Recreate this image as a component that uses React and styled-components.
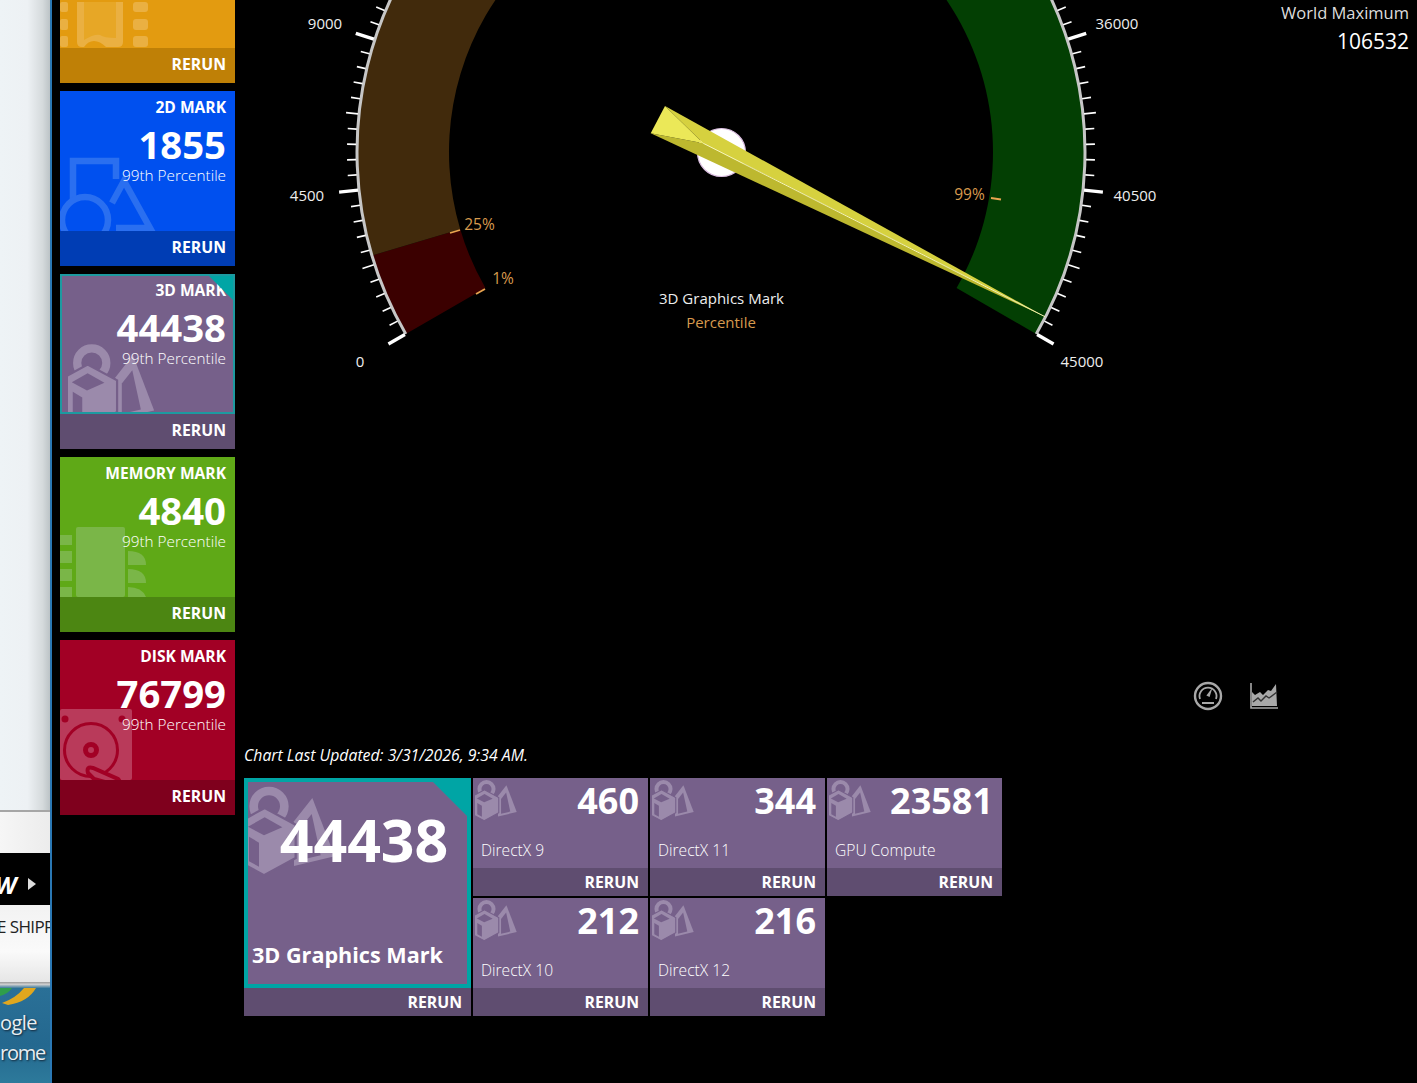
import React from 'react';
import styled, { createGlobalStyle } from 'styled-components';

const GlobalStyle = createGlobalStyle`
  html, body { margin: 0; padding: 0; background: #000; }
  body { font-family: "Open Sans", "Noto Sans", sans-serif; color: #fff; }
`;

const Page = styled.div`
  width: 1417px;
  height: 1083px;
  display: flex;
  overflow: hidden;
  background: #000;
`;

/* the browser window and desktop peeking out on the left */
const Peek = styled.div`
  flex: 0 0 50px;
  display: flex;
  flex-direction: column;
  overflow: hidden;
  border-right: 2px solid #2a78b4;
  white-space: nowrap;
`;

const PeekTop = styled.div`
  height: 810px;
  background: linear-gradient(90deg, #eef3f6 0%, #edf1f4 55%, #d5dadc 85%, #bcc3c6 100%);
  border-bottom: 2px solid #a6a6a6;
`;

const PeekWhite = styled.div`
  height: 41px;
  background: linear-gradient(90deg, #f6f6f6, #ececec);
`;

const PeekBanner = styled.div`
  height: 52px;
  box-sizing: border-box;
  padding-top: 10px;
  background: #000;
  display: flex;
  align-items: center;
  gap: 12px;
  font-size: 24px;
  font-weight: 700;
  font-style: italic;
  text-indent: -5px;
`;

const PeekArrow = styled.span`
  width: 0;
  height: 0;
  border-left: 8px solid #ddd;
  border-top: 6px solid transparent;
  border-bottom: 6px solid transparent;
`;

const PeekShipping = styled.div`
  height: 77px;
  box-sizing: border-box;
  padding-top: 10px;
  background: linear-gradient(180deg, #f2f2f2, #fafafa 60%, #e6e6e6);
  color: #222;
  font-size: 17px;
  letter-spacing: -0.6px;
  text-indent: -3px;
`;

const PeekShade = styled.div`
  height: 6px;
  background: linear-gradient(180deg, #9a9a9a, #cfcfcf 40%, #3d7a9c);
`;

const PeekDesktop = styled.div`
  flex: 1;
  background: linear-gradient(180deg, #2a7097, #24688f 60%, #2d7a9b);
  display: flex;
  flex-direction: column;
`;

const ChromeArc = styled.svg`
  display: block;
  flex: none;
`;

const DesktopLabel = styled.div`
  font-size: 20px;
  line-height: 30px;
  letter-spacing: ${(p) => p.$squeeze}px;
  color: #e8eef2;
  text-shadow: 1px 1px 2px #123;
`;

const Sidebar = styled.div`
  flex: 0 0 175px;
  margin: -92px 0 0 8px;
  display: flex;
  flex-direction: column;
  gap: 8px;
`;

const Card = styled.div`
  height: 175px;
  flex: none;
  display: flex;
  flex-direction: column;
  background: ${(p) => p.$bg};
`;

const CardBody = styled.div`
  position: relative;
  height: 140px;
  box-sizing: border-box;
  overflow: hidden;
  padding: 6px 9px 0 0;
  text-align: right;
  ${(p) => p.$selected && 'border: 2px solid #1d9aa0; padding: 4px 7px 0 0;'}
`;

const CardTitle = styled.div`
  position: relative;
  font-size: 15.6px;
  line-height: 20px;
  font-weight: 700;
`;

const CardScore = styled.div`
  position: relative;
  font-size: 38.3px;
  line-height: 40px;
  font-weight: 700;
  margin-top: 7px;
`;

const CardRank = styled.div`
  position: relative;
  font-size: 15.3px;
  line-height: 18px;
  font-weight: 300;
  margin-top: 2px;
`;

const Corner = styled.div`
  position: absolute;
  top: ${(p) => p.$inset}px;
  right: ${(p) => p.$inset}px;
  width: 0;
  height: 0;
  border-top: ${(p) => p.$size}px solid #00a5a5;
  border-left: ${(p) => p.$size}px solid transparent;
`;

const Rerun = styled.div`
  flex: none;
  height: ${(p) => p.$h}px;
  line-height: ${(p) => p.$line}px;
  padding-right: 9px;
  text-align: right;
  font-size: 15.8px;
  font-weight: 700;
  background: ${(p) => p.$bg};
`;

const IconSlot = styled.svg`
  position: absolute;
  left: ${(p) => p.$left}px;
  bottom: ${(p) => p.$bottom}px;
  display: block;
`;

const ShapesSlot = styled.svg`
  position: absolute;
  left: ${(p) => p.$left}px;
  top: ${(p) => p.$top}px;
  display: block;
`;

const Main = styled.div`
  flex: 1;
  margin-left: 9px;
  display: flex;
  flex-direction: column;
`;

const Stage = styled.div`
  position: relative;
  height: 680px;
  flex: none;
`;

const GaugeSvg = styled.svg`
  display: block;
  font-family: "Open Sans", "Noto Sans", sans-serif;
`;

const WorldMax = styled.div`
  position: absolute;
  top: 2px;
  right: 8px;
  text-align: right;
`;

const WorldLabel = styled.div`
  font-size: 16.5px;
  line-height: 22px;
  color: #ddd;
`;

const WorldValue = styled.div`
  font-size: 21px;
  line-height: 35px;
`;

const ViewSwitch = styled.div`
  display: flex;
  justify-content: flex-end;
  gap: 26px;
  height: 32px;
  padding-right: 138px;
  flex: none;
  align-items: center;
`;

const Updated = styled.div`
  font-size: 15.8px;
  line-height: 20px;
  font-style: italic;
  margin-top: 33px;
`;

const TileGrid = styled.div`
  margin-top: 13px;
  display: grid;
  grid-template-columns: 227px 175px 175px 175px;
  grid-template-rows: 118px 118px;
  gap: 2px;
`;

const Tile = styled.div`
  display: flex;
  flex-direction: column;
  background: #76608a;
  ${(p) => p.$large && 'grid-row: span 2;'}
`;

const TileBody = styled.div`
  position: relative;
  flex: 1;
  overflow: hidden;
  box-sizing: border-box;
  display: flex;
  flex-direction: column;
  justify-content: space-between;
  padding: 3px 9px 8px 8px;
`;

const LargeBody = styled(TileBody)`
  border: 4px solid #00a5a5;
  padding: 23px 4px 14px 4px;
`;

const TileScore = styled.div`
  position: relative;
  text-align: right;
  font-size: 36px;
  line-height: 40px;
  font-weight: 700;
`;

const TileLabel = styled.div`
  position: relative;
  font-size: 15.6px;
  line-height: 20px;
  font-weight: 300;
`;

const LargeScore = styled.div`
  position: relative;
  text-align: center;
  font-size: 59px;
  line-height: 68px;
  font-weight: 700;
  padding-left: 13px;
`;

const LargeLabel = styled.div`
  position: relative;
  font-size: 21.6px;
  line-height: 30px;
  font-weight: 700;
`;

/* ---------- icons ---------- */

const ShapesIcon = ({ size, left, top }) => (
  <ShapesSlot $left={left} $top={top} width={size} height={size} viewBox="0 0 300 300">
    <circle cx="75" cy="85" r="46" fill="none" stroke="#9b8aab" strokeWidth="26" />
    <path d="M205 60 L272 235 L150 264 L150 130 Z" fill="#9b8aab" />
    <path d="M203 108 L230 232 L170 246 L170 150 Z" fill="#76608a" />
    <path d="M62 90 L155 140 L155 240 L60 292 L-35 240 L-30 140 Z" fill="#9b8aab" stroke="#76608a" strokeWidth="7" />
    <path d="M62 118 L115 148 L60 172 L12 146 Z" fill="#76608a" />
    <path d="M15 176 L45 194 L45 266 L15 250 Z" fill="#76608a" />
  </ShapesSlot>
);

const SquaresIcon = () => (
  <IconSlot $left={0} $bottom={0} width="100" height="76" viewBox="0 0 100 76">
    <g fill="none" stroke="#2a6ff0" strokeWidth="6.5">
      <path d="M13 44 V6 H56 V24" />
      <circle cx="25" cy="65" r="23" />
      <path d="M52 48 L64 26 L90 73 H56" />
    </g>
  </IconSlot>
);

const CpuIcon = () => (
  <IconSlot $left={0} $bottom={0} width="100" height="46" viewBox="0 0 100 46">
    <g fill="#eab042">
      <path d="M22 -6 H57 Q63 -6 63 0 V40 Q63 45 58 45 H46 Q40 39 34 39 Q28 39 24 45 H22 Q17 45 17 40 V0 Q17 -6 22 -6 Z" />
      <rect x="0" y="0" width="8" height="10" rx="2" />
      <rect x="0" y="17" width="8" height="11" rx="2" />
      <rect x="0" y="34" width="8" height="11" rx="2" />
      <rect x="73" y="0" width="15" height="10" rx="3" />
      <rect x="73" y="17" width="15" height="11" rx="3" />
      <rect x="73" y="34" width="15" height="11" rx="3" />
    </g>
    <path d="M24 0 H56 V36 Q44 36 40 33 Q34 32 24 38 Z" fill="#e7a726" />
  </IconSlot>
);

const RamIcon = () => (
  <IconSlot $left={0} $bottom={0} width="90" height="70" viewBox="0 0 90 70">
    <g fill="#7ab648">
      <rect x="16" y="0" width="49" height="70" rx="2" />
      <rect x="0" y="8" width="12" height="10" />
      <rect x="0" y="24" width="12" height="12" />
      <rect x="0" y="42" width="12" height="12" />
      <rect x="0" y="60" width="12" height="10" />
      <path d="M68 24 Q86 24 86 38 H68 Z" />
      <path d="M68 42 Q86 42 86 56 H68 Z" />
      <path d="M68 60 Q82 60 86 70 H68 Z" />
    </g>
  </IconSlot>
);

const DiskIcon = () => (
  <IconSlot $left={0} $bottom={0} width="72" height="71" viewBox="0 0 72 71">
    <rect width="72" height="71" rx="2" fill="#b93a5a" />
    <g fill="#a20025">
      <circle cx="5" cy="10" r="3.5" />
      <circle cx="62" cy="10" r="3.5" />
    </g>
    <circle cx="31" cy="41" r="26.5" fill="none" stroke="#a20025" strokeWidth="3" />
    <circle cx="31" cy="41" r="5.5" fill="none" stroke="#a20025" strokeWidth="5" />
    <path d="M28 64 Q26 57 33 59 L58 70 Q62 74 56 76 L34 70 Z" fill="#b93a5a" stroke="#a20025" strokeWidth="4" />
  </IconSlot>
);

const DialIcon = () => (
  <svg width="30" height="30" viewBox="0 0 30 30">
    <circle cx="15" cy="15" r="13" fill="none" stroke="#a8a8a8" strokeWidth="2.4" />
    <path d="M7 18 A8.5 8.5 0 1 1 23 18" fill="none" stroke="#a8a8a8" strokeWidth="1.8" />
    <path d="M13.4 14.5 L19.5 6.5 L16.6 16 Z" fill="#a8a8a8" />
    <path d="M9 22 H21" stroke="#a8a8a8" strokeWidth="2" />
  </svg>
);

const TrendIcon = () => (
  <svg width="30" height="30" viewBox="0 0 30 30">
    <path d="M2 2 V27 H29" fill="none" stroke="#a8a8a8" strokeWidth="1.6" />
    <path d="M3 11 L6 14 L11 11 L14 14 L19 9 L22 10 L27 3 L28 25 H3 Z" fill="#a8a8a8" />
    <path d="M4 21 L9 17 L12 20 L17 15 L20 17 L28 11" fill="none" stroke="#333" strokeWidth="1.4" />
  </svg>
);

/* ---------- gauge ---------- */

const CX = 721;
const CY = 152;
const R_OUT = 364;
const R_IN = 272;

const polar = (deg, r) => {
  const a = (deg * Math.PI) / 180;
  return [CX + r * Math.cos(a), CY + r * Math.sin(a)];
};

const band = (from, to, fill) => {
  const [ax, ay] = polar(from, R_OUT);
  const [bx, by] = polar(to, R_OUT);
  const [cx, cy] = polar(to, R_IN);
  const [dx, dy] = polar(from, R_IN);
  const large = to - from > 180 ? 1 : 0;
  return (
    <path
      fill={fill}
      d={`M${ax} ${ay} A${R_OUT} ${R_OUT} 0 ${large} 1 ${bx} ${by} L${cx} ${cy} A${R_IN} ${R_IN} 0 ${large} 0 ${dx} ${dy} Z`}
    />
  );
};

const tickMarks = Array.from({ length: 101 }, (_, i) => {
  const deg = 150 + i * 2.4;
  const major = i % 10 === 0;
  const mid = i % 5 === 0 && !major;
  const [x1, y1] = polar(deg, R_OUT + 1);
  const [x2, y2] = polar(deg, R_OUT + (major ? 20 : mid ? 13 : 10));
  return (
    <line key={i} x1={x1} y1={y1} x2={x2} y2={y2} stroke="#fff" strokeWidth={major ? 3.4 : 1.6} />
  );
});

const scaleLabels = [
  ['0', 360, 367],
  ['4500', 307, 201],
  ['9000', 325, 29],
  ['36000', 1117, 29],
  ['40500', 1135, 201],
  ['45000', 1082, 367],
];

const pctLabels = [
  ['25%', 479.5, 230, 450, 233, 460, 230],
  ['1%', 503, 284, 476, 294, 485, 289],
  ['99%', 969.5, 200, 991, 198, 1001, 199.5],
];

const Gauge = () => {
  const [ox1, oy1] = polar(150, R_OUT);
  const [ox2, oy2] = polar(390, R_OUT);
  return (
    <GaugeSvg width="1173" height="680" viewBox="244 0 1173 680">
      {band(150, 163.5, '#3b0000')}
      {band(163.5, 270, '#412a0c')}
      {band(270, 390, '#033f03')}
      <path
        d={`M${ox1} ${oy1} A${R_OUT} ${R_OUT} 0 1 1 ${ox2} ${oy2}`}
        fill="none"
        stroke="#c6c6c6"
        strokeWidth="3"
      />
      {tickMarks}
      {scaleLabels.map(([t, x, y]) => (
        <text key={t} x={x} y={y} fill="#eee" fontSize="15" textAnchor="middle">{t}</text>
      ))}
      {pctLabels.map(([t, x, y, x1, y1, x2, y2]) => (
        <g key={t}>
          <text x={x} y={y} fill="#d79a4e" fontSize="15.5" textAnchor="middle">{t}</text>
          <line x1={x1} y1={y1} x2={x2} y2={y2} stroke="#e9a550" strokeWidth="1.8" />
        </g>
      ))}
      <text x="721.5" y="304" fill="#eee" fontSize="15" textAnchor="middle">3D Graphics Mark</text>
      <text x="721" y="328" fill="#d79a4e" fontSize="15" textAnchor="middle">Percentile</text>

      <circle cx="721.5" cy="152.5" r="24" fill="#fff" stroke="#dcbfe2" strokeWidth="1.2" />
      <polygon points="665,106 703.3,143.3 1045,316.7" fill="#d6d13f" />
      <polygon points="650.7,133.3 703.3,143.3 1045,316.7" fill="#bdb82f" />
      <polygon points="665,106 650.7,133.3 703.3,143.3" fill="#ebe858" />
      <line x1="703.3" y1="143.3" x2="1045" y2="316.7" stroke="#f6f5b8" strokeWidth="1" />
    </GaugeSvg>
  );
};

/* ---------- data ---------- */

const cards = [
  { key: 'cpu', bg: '#e39b10', foot: '#bf8006', icon: <CpuIcon /> },
  { key: '2d', bg: '#0050ef', foot: '#003db4', title: '2D MARK', score: '1855', rank: '99th Percentile', icon: <SquaresIcon /> },
  { key: '3d', bg: '#76608a', foot: '#5f4d70', title: '3D MARK', score: '44438', rank: '99th Percentile', selected: true,
    icon: <ShapesIcon size={95} left={6} top={60} /> },
  { key: 'mem', bg: '#5fa917', foot: '#4c8612', title: 'MEMORY MARK', score: '4840', rank: '99th Percentile', icon: <RamIcon /> },
  { key: 'disk', bg: '#a20025', foot: '#7f001d', title: 'DISK MARK', score: '76799', rank: '99th Percentile', icon: <DiskIcon /> },
];

const tiles = [
  ['DirectX 9', '460'],
  ['DirectX 11', '344'],
  ['GPU Compute', '23581'],
  ['DirectX 10', '212'],
  ['DirectX 12', '216'],
];

const App = () => (
  <>
    <GlobalStyle />
    <Page>
      <Peek>
        <PeekTop />
        <PeekWhite />
        <PeekBanner>W<PeekArrow /></PeekBanner>
        <PeekShipping>E SHIPPING</PeekShipping>
        <PeekShade />
        <PeekDesktop>
          <ChromeArc width="50" height="20" viewBox="0 0 50 20">
            <path d="M0 0 H12 Q8 6 0 8 Z" fill="#2f9e4a" />
            <path d="M2 15 Q16 10 24 0 H36 Q28 14 8 17 Z" fill="#e0a71e" />
          </ChromeArc>
          <DesktopLabel $squeeze={-0.6}>ogle</DesktopLabel>
          <DesktopLabel $squeeze={-1.2}>rome</DesktopLabel>
        </PeekDesktop>
      </Peek>

      <Sidebar>
        {cards.map((c) => (
          <Card key={c.key} $bg={c.bg}>
            <CardBody $selected={c.selected}>
              {c.icon}
              {c.title && <CardTitle>{c.title}</CardTitle>}
              {c.score && <CardScore>{c.score}</CardScore>}
              {c.rank && <CardRank>{c.rank}</CardRank>}
              {c.selected && <Corner $inset={-2} $size={28} />}
            </CardBody>
            <Rerun $h={35} $line={32} $bg={c.foot}>RERUN</Rerun>
          </Card>
        ))}
      </Sidebar>

      <Main>
        <Stage>
          <Gauge />
          <WorldMax>
            <WorldLabel>World Maximum</WorldLabel>
            <WorldValue>106532</WorldValue>
          </WorldMax>
        </Stage>
        <ViewSwitch>
          <DialIcon />
          <TrendIcon />
        </ViewSwitch>
        <Updated>Chart Last Updated: 3/31/2026, 9:34 AM.</Updated>
        <TileGrid>
          <Tile $large>
            <LargeBody>
              <ShapesIcon size={100} left={-4} top={-4} />
              <LargeScore>44438</LargeScore>
              <LargeLabel>3D Graphics Mark</LargeLabel>
              <Corner $inset={-4} $size={42} />
            </LargeBody>
            <Rerun $h={28} $line={28} $bg="#5f4d70">RERUN</Rerun>
          </Tile>
          {tiles.map(([label, score]) => (
            <Tile key={label}>
              <TileBody>
                <ShapesIcon size={46} left={2} top={-2} />
                <TileScore>{score}</TileScore>
                <TileLabel>{label}</TileLabel>
              </TileBody>
              <Rerun $h={28} $line={28} $bg="#5f4d70">RERUN</Rerun>
            </Tile>
          ))}
        </TileGrid>
      </Main>
    </Page>
  </>
);

export default App;
